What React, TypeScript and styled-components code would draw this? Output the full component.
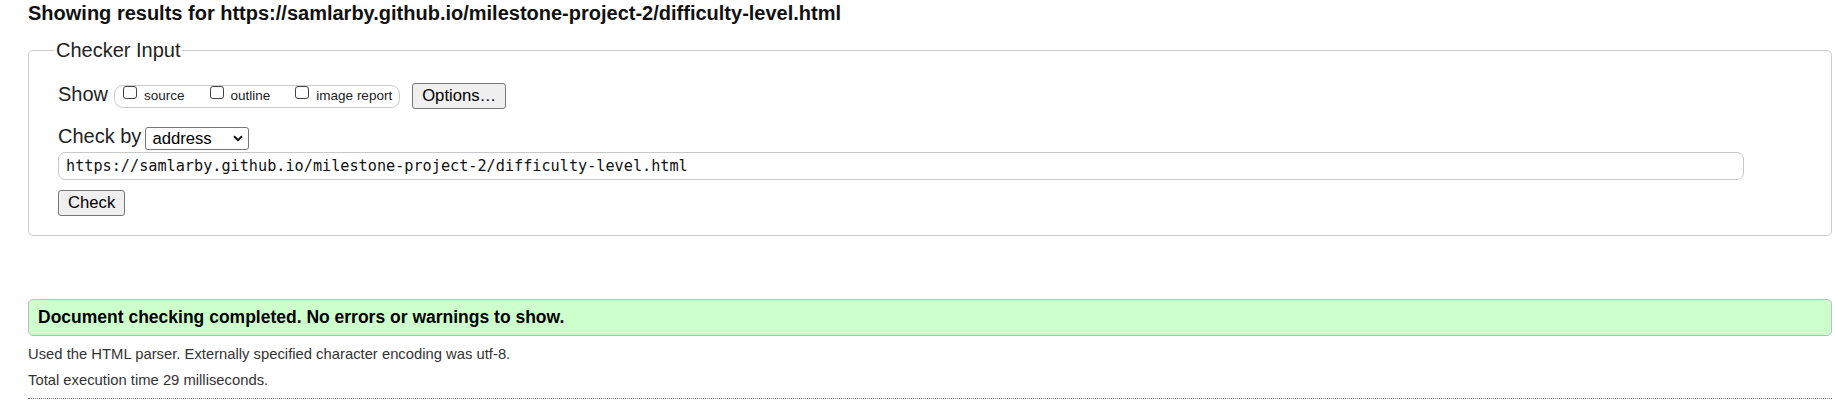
import React from "react";
import styled, { createGlobalStyle } from "styled-components";

const GlobalStyle = createGlobalStyle`
  html, body { margin: 0; padding: 0; background: #fff; }
  body { font-family: "Liberation Sans", Arial, sans-serif; color: #222; }
`;

const Page = styled.main`
  width: 1835px;
  box-sizing: border-box;
  padding: 0 3px 0 28px;
`;

const Heading = styled.h2`
  margin: 2px 0 0;
  font-size: 20px;
  line-height: 23px;
  font-weight: 700;
  color: #111;
`;

const Fieldset = styled.fieldset`
  margin: 13px 0 0;
  padding: 20px 29px 19px 29px;
  border: 1px solid #ccc;
  border-radius: 5px;
  min-width: 0;
`;

const Legend = styled.legend`
  font-size: 20px;
  line-height: 25px;
  padding: 0 1px;
  margin-left: -3px;
  color: #222;
`;

const Row = styled.div<{ $gapTop?: number }>`
  display: flex;
  align-items: flex-start;
  margin-top: ${(p) => p.$gapTop ?? 0}px;
`;

const RowLabel = styled.span`
  font-size: 20px;
  line-height: 23px;
  color: #222;
`;

const Group = styled.div`
  display: flex;
  align-items: flex-start;
  gap: 25px;
  box-sizing: border-box;
  height: 23px;
  margin: 2px 0 0 6px;
  padding: 0 7px 0 8px;
  border: 1px solid #ccc;
  border-radius: 9px;
`;

const Option = styled.label`
  display: flex;
  align-items: flex-start;
  gap: 7px;
`;

const Checkbox = styled.input.attrs({ type: "checkbox" })`
  appearance: none;
  width: 14px;
  height: 13px;
  margin: 0;
  box-sizing: border-box;
  border: 1px solid #444;
  border-radius: 3px;
  background: #fff;
`;

const OptionText = styled.span`
  font-size: 13.5px;
  line-height: 16px;
  margin-top: 2px;
  color: #222;
`;

const Button = styled.button<{ $ml?: number }>`
  height: 26px;
  box-sizing: border-box;
  margin: 0 0 0 ${(p) => p.$ml ?? 0}px;
  padding: 0 9px;
  font-family: "Liberation Sans", Arial, sans-serif;
  font-size: 16.67px;
  color: #000;
  background: #efefef;
  border: 1px solid #767676;
  border-radius: 3px;
`;

const SelectWrap = styled.span`
  position: relative;
  display: inline-block;
  margin: 2px 0 0 4px;
`;

const Select = styled.select`
  appearance: none;
  width: 104px;
  height: 23px;
  box-sizing: border-box;
  margin: 0;
  padding: 0 0 0 6px;
  font-family: "Liberation Sans", Arial, sans-serif;
  font-size: 16.67px;
  color: #000;
  background: #fff;
  border: 1px solid #767676;
  border-radius: 3px;
`;

const Chevron = styled.svg`
  position: absolute;
  right: 6px;
  top: 8px;
  width: 10px;
  height: 7px;
  pointer-events: none;
`;

const UrlInput = styled.input`
  display: block;
  width: calc(100% - 58px);
  height: 28px;
  box-sizing: border-box;
  margin: 2px 0 0;
  padding: 0 7px;
  font-family: "DejaVu Sans Mono", monospace;
  font-size: 15.2px;
  color: #111;
  border: 1px solid #c8c8c8;
  border-radius: 7px;
  background: #fff;
`;

const SubmitRow = styled.div`
  margin-top: 10px;
  display: flex;
`;

const Success = styled.div`
  margin-top: 63px;
  height: 37px;
  box-sizing: border-box;
  display: flex;
  align-items: center;
  padding-left: 9px;
  background: #ccffcc;
  border: 1px solid #bdbdbd;
  border-radius: 5px;
  font-size: 17.5px;
  font-weight: 700;
  color: #000;
`;

const Note = styled.p<{ $first?: boolean }>`
  margin: ${(p) => (p.$first ? "5px" : "0")} 0 0;
  font-size: 14.8px;
  line-height: 26px;
  color: #333;
`;

const Rule = styled.hr`
  margin: 5px 0 0;
  height: 0;
  border: 0;
  border-top: 1px dotted #777;
`;

export default function App() {
  return (
    <>
      <GlobalStyle />
      <Page>
        <Heading>
          Showing results for https://samlarby.github.io/milestone-project-2/difficulty-level.html
        </Heading>
        <Fieldset>
          <Legend>Checker Input</Legend>
          <Row>
            <RowLabel>Show</RowLabel>
            <Group>
              <Option>
                <Checkbox />
                <OptionText>source</OptionText>
              </Option>
              <Option>
                <Checkbox />
                <OptionText>outline</OptionText>
              </Option>
              <Option>
                <Checkbox />
                <OptionText>image report</OptionText>
              </Option>
            </Group>
            <Button $ml={12} type="button">Options…</Button>
          </Row>
          <Row $gapTop={16}>
            <RowLabel>Check by</RowLabel>
            <SelectWrap>
              <Select defaultValue="address">
                <option value="address">address</option>
                <option value="file">file upload</option>
                <option value="text">text input</option>
              </Select>
              <Chevron viewBox="0 0 10 7">
                <path d="M1 1.2 L5 5.2 L9 1.2" fill="none" stroke="#111" strokeWidth="2" />
              </Chevron>
            </SelectWrap>
          </Row>
          <UrlInput
            type="text"
            readOnly
            value="https://samlarby.github.io/milestone-project-2/difficulty-level.html"
          />
          <SubmitRow>
            <Button type="button">Check</Button>
          </SubmitRow>
        </Fieldset>
        <Success>Document checking completed. No errors or warnings to show.</Success>
        <Note $first>Used the HTML parser. Externally specified character encoding was utf-8.</Note>
        <Note>Total execution time 29 milliseconds.</Note>
        <Rule />
      </Page>
    </>
  );
}
